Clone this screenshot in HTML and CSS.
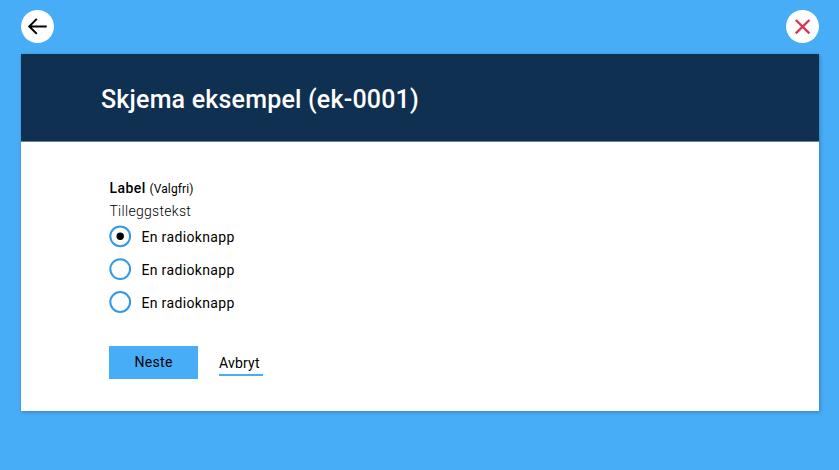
FILE: index.html
```html
<!DOCTYPE html>
<html lang="nb">
<head>
<meta charset="utf-8">
<title>Skjema eksempel</title>
<link rel="stylesheet" href="styles.css">
</head>
<body>
<nav class="toolbar">
  <button class="round" aria-label="Tilbake">
    <svg width="33" height="33" viewBox="0 0 33 33" fill="none" stroke="#000" stroke-width="2"><path d="M25.7 16.4H8.5M15.8 8.9L8.3 16.4L15.8 23.9"/></svg>
  </button>
  <button class="round" aria-label="Lukk">
    <svg width="33" height="33" viewBox="0 0 33 33" fill="none" stroke="#d5354f" stroke-width="2.3"><path d="M9.8 10L23.4 23.4M23.4 10L9.8 23.4"/></svg>
  </button>
</nav>
<main class="card">
  <header class="card-header"><h1>Skjema eksempel (ek-0001)</h1></header>
  <form class="form">
    <div class="label"><span class="label-name">Label</span><span class="optional">(Valgfri)</span></div>
    <div class="hint">Tilleggstekst</div>
    <div class="options">
      <label class="option"><svg class="radio" viewBox="0 0 22 22"><circle class="ring" cx="11.2" cy="11.3" r="9.9"/><circle cx="11.2" cy="11.3" r="3.7"/></svg><span class="option-text">En radioknapp</span></label>
      <label class="option"><svg class="radio" viewBox="0 0 22 22"><circle class="ring" cx="11.2" cy="11.1" r="9.9"/></svg><span class="option-text">En radioknapp</span></label>
      <label class="option"><svg class="radio" viewBox="0 0 22 22"><circle class="ring" cx="11.2" cy="11" r="9.9"/></svg><span class="option-text">En radioknapp</span></label>
    </div>
    <div class="actions">
      <button type="button" class="next">Neste</button>
      <a class="cancel">Avbryt</a>
    </div>
  </form>
</main>
</body>
</html>
```
FILE: styles.css
```css
* { box-sizing: border-box; }
body {
  margin: 0;
  height: 470px;
  padding: 10px 20px 0 21px;
  background: #48adf7;
  color: #000;
  font-family: Roboto, "Liberation Sans", sans-serif;
  overflow: hidden;
}
.toolbar { display: flex; justify-content: space-between; height: 44px; }
.round {
  width: 33px;
  height: 33px;
  padding: 0;
  border: 0;
  border-radius: 50%;
  background: #fff;
}
.round svg { display: block; }
.card {
  height: 357px;
  background: #fff;
  box-shadow: 1px 1px 4px rgba(0, 0, 0, .28);
}
.card-header {
  display: flex;
  align-items: center;
  height: 88px;
  padding: 5px 0 0 80px;
  border-bottom: 1px solid #687f97;
  background: #103052;
  color: #fff;
}
h1 { margin: 0; font-size: 25px; font-weight: 500; line-height: 30px; letter-spacing: .2px; white-space: nowrap; }
.form { padding: 36px 0 0 88.4px; }
.label { display: flex; gap: 3.5px; height: 21px; line-height: 20px; align-items: baseline; }
.label-name { font-size: 14px; font-weight: 500; letter-spacing: .5px; }
.optional { font-size: 12px; letter-spacing: .1px; }
.hint { height: 26px; line-height: 24px; font-size: 14px; font-weight: 300; letter-spacing: .3px; }
.options { display: grid; row-gap: 11px; }
.option { display: flex; align-items: center; gap: 10px; height: 22px; }
.radio { width: 22px; height: 22px; overflow: visible; }
.ring { fill: none; stroke: #3498e2; stroke-width: 2; }
.option-text { padding-top: 1px; font-size: 14px; letter-spacing: .35px; line-height: 22px; }
.actions { display: flex; gap: 21.2px; margin-top: 33px; }
.next {
  width: 88.4px;
  height: 32.5px;
  padding: 0;
  border: 0;
  background: #48adf7;
  color: #000;
  font: 14px Roboto, sans-serif;
  letter-spacing: .3px;
}
.cancel {
  width: 44.5px;
  height: 30px;
  padding-top: 7px;
  border-bottom: 2px solid #48adf7;
  font-size: 14px;
  line-height: 20px;
  letter-spacing: .2px;
}
```
